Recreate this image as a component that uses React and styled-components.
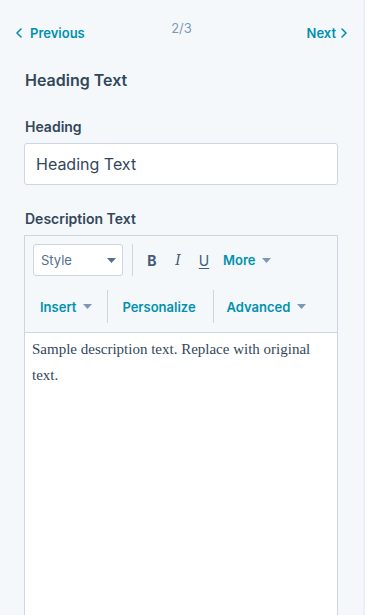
import React from 'react';
import styled, { createGlobalStyle } from 'styled-components';

const GlobalStyle = createGlobalStyle`
html, body {
  margin: 0;
  padding: 0;
  background: #f5f8fa;
}
body {
  font-family: Inter, "Noto Sans", sans-serif;
  color: #33475b;
}
`;

const Panel = styled.div`
width: 363px;
height: 615px;
overflow: hidden;
background: #f5f8fa;
border-right: 2px solid #eaf0f6;
box-sizing: content-box;
display: flex;
flex-direction: column;
`;

const Pager = styled.div`
display: grid;
grid-template-columns: 1fr auto 1fr;
align-items: start;
padding: 20px 16px 0 16px;
height: 28px;
`;

const PageLink = styled.a`
display: flex;
align-items: center;
justify-content: ${p => (p.$end ? 'flex-end' : 'flex-start')};
gap: 5px;
color: #0091ae;
font-weight: 600;
font-size: 13px;
line-height: 16px;
margin-top: 5px;
text-decoration: none;
cursor: pointer;
`;

const PageCount = styled.span`
color: #7c98b6;
font-size: 13px;
line-height: 16px;
`;

const Body = styled.div`
padding: 21px 25px 0 24px;
display: flex;
flex-direction: column;
flex: 1;
`;

const Title = styled.h2`
margin: 0 0 0 1px;
font-size: 16px;
line-height: 22px;
font-weight: 600;
color: #33475b;
`;

const Label = styled.label`
display: block;
margin: ${p => p.$top}px 0 7px 1px;
font-size: 14px;
line-height: 18px;
font-weight: 600;
color: #33475b;
`;

const TextInput = styled.input`
box-sizing: border-box;
width: 100%;
height: 42px;
padding: 0 11px;
border: 1px solid #cbd6e2;
border-radius: 3px;
background: #fff;
font-family: inherit;
font-size: 16px;
color: #33475b;
outline: none;
`;

const Editor = styled.div`
border: 1px solid #cbd6e2;
border-bottom: none;
flex: 1;
display: flex;
flex-direction: column;
background: #fff;
`;

const Toolbar = styled.div`
background: #f5f8fa;
border-bottom: 1px solid #cbd6e2;
padding: 8px 0 9px 8px;
`;

const ToolRow = styled.div`
display: flex;
align-items: center;
height: ${p => p.$h}px;
margin-top: ${p => p.$top || 0}px;
`;

const StyleSelect = styled.div`
box-sizing: border-box;
width: 90px;
height: 32px;
border: 1px solid #cbd6e2;
border-radius: 3px;
background: #fff;
display: flex;
align-items: center;
justify-content: space-between;
padding: 0 6px 0 7px;
font-size: 13px;
color: #516f90;
`;

const Divider = styled.div`
width: 1px;
align-self: stretch;
background: #cbd6e2;
margin: ${p => p.$m};
`;

const FormatBtn = styled.span`
width: 26px;
text-align: center;
font-size: 14px;
color: #425b76;
font-family: ${p => (p.$i ? '"DejaVu Serif", serif' : 'Inter, sans-serif')};
font-weight: ${p => (p.$b ? 700 : 400)};
font-style: ${p => (p.$i ? 'italic' : 'normal')};
text-decoration: ${p => (p.$u ? 'underline' : 'none')};
text-underline-offset: 2px;
`;

const ToolBtn = styled.span`
display: flex;
align-items: center;
gap: 7px;
color: #0091ae;
font-weight: 600;
font-size: 13px;
padding: 0 ${p => p.$pad || 0}px;
`;

const Content = styled.div`
padding: 3px 7px;
font-family: "Liberation Serif", Georgia, serif;
font-size: 15px;
line-height: 26px;
color: #33475b;
`;

const Caret = ({ color = '#7c98b6' }) => (
  <svg width="9" height="5" viewBox="0 0 9 5">
    <path d="M0 0 L9 0 L4.5 5 Z" fill={color} />
  </svg>
);

const Chevron = ({ left }) => (
  <svg width="6" height="10" viewBox="0 0 6 10">
    <path
      d={left ? 'M5 1 L1 5 L5 9' : 'M1 1 L5 5 L1 9'}
      fill="none"
      stroke="#0091ae"
      strokeWidth="1.6"
      strokeLinecap="round"
      strokeLinejoin="round"
    />
  </svg>
);

export default function App() {
  return (
    <Panel>
      <GlobalStyle />
      <Pager>
        <PageLink>
          <Chevron left />
          <span style={{ marginLeft: 3 }}>Previous</span>
        </PageLink>
        <PageCount>2/3</PageCount>
        <PageLink $end>
          Next
          <Chevron />
        </PageLink>
      </Pager>
      <Body>
        <Title>Heading Text</Title>
        <Label $top={27}>Heading</Label>
        <TextInput defaultValue="Heading Text" />
        <Label $top={25}>Description Text</Label>
        <Editor>
          <Toolbar>
            <ToolRow $h={32}>
              <StyleSelect>
                Style
                <Caret color="#516f90" />
              </StyleSelect>
              <Divider $m="0 6px 0 9px" />
              <FormatBtn $b>B</FormatBtn>
              <FormatBtn $i>I</FormatBtn>
              <FormatBtn $u>U</FormatBtn>
              <ToolBtn $pad={6}>
                More
                <Caret />
              </ToolBtn>
            </ToolRow>
            <ToolRow $h={33} $top={14}>
              <ToolBtn $pad={7}>
                Insert
                <Caret />
              </ToolBtn>
              <Divider $m="0 14px 0 8px" />
              <ToolBtn>Personalize</ToolBtn>
              <Divider $m="0 13px 0 17px" />
              <ToolBtn>
                Advanced
                <Caret />
              </ToolBtn>
            </ToolRow>
          </Toolbar>
          <Content>Sample description text. Replace with original text.</Content>
        </Editor>
      </Body>
    </Panel>
  );
}
